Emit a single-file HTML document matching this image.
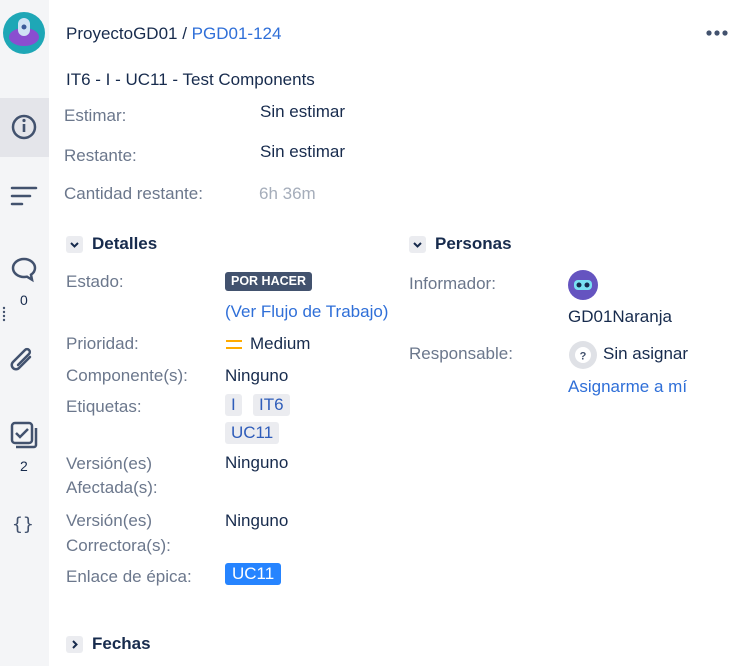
<!DOCTYPE html>
<html><head><meta charset="utf-8"><style>
*{margin:0;padding:0;box-sizing:border-box}
body{width:742px;height:666px;background:#fff;font-family:"Liberation Sans",sans-serif;font-size:17px;color:#172b4d;position:relative;overflow:hidden}
.a{position:absolute;white-space:nowrap;line-height:20px}
.l{color:#6b778c}
.blue{color:#2f6fd8}
#side{position:absolute;left:0;top:0;width:49px;height:666px;background:#f4f5f7}
.tag{background:#ebecf0;color:#2f5dba;padding:0 6px;border-radius:3px;line-height:22px;height:22px}
.h{font-weight:bold;font-size:17px}
.chev{position:absolute;width:17px;height:17px;background:#ebecf0;border-radius:3px}
</style></head><body>
<div id="side">
<div style="position:absolute;left:0;top:98px;width:49px;height:59px;background:#e4e5ea"></div>
<svg width="49" height="666" style="position:absolute;left:0;top:0">
<circle cx="24" cy="33" r="21" fill="#1ea7b6"/><ellipse cx="24" cy="37" rx="15" ry="9" fill="#8a4ed0"/><rect x="18" y="18" width="12" height="18" rx="6" fill="#cfe3f5"/><circle cx="24" cy="27" r="2.5" fill="#3b5a9a"/>
<circle cx="24" cy="127" r="11" fill="none" stroke="#42526e" stroke-width="2.5"/><rect x="22.7" y="124" width="2.6" height="8" fill="#42526e"/><circle cx="24" cy="120.5" r="1.6" fill="#42526e"/>
<g stroke="#42526e" stroke-width="2.5" stroke-linecap="round"><line x1="12" y1="188" x2="36" y2="188"/><line x1="12" y1="196" x2="30" y2="196"/><line x1="12" y1="204" x2="22" y2="204"/></g>
<path d="M24 259c-6 0-11 4-11 9s5 9 11 9c1 0 2 0 3-0.3l5 3-1-5c3-2 4-4 4-6.7 0-5-5-9-11-9z" fill="none" stroke="#42526e" stroke-width="2.5"/>
<g fill="#42526e"><circle cx="4" cy="308" r="1.2"/><circle cx="4" cy="312" r="1.2"/><circle cx="4" cy="316" r="1.2"/><circle cx="4" cy="320" r="1.2"/></g>
<path d="M30 357l-11 11a4 4 0 0 1-6-6l12-12a2.5 2.5 0 0 1 4 4l-11 11" fill="none" stroke="#42526e" stroke-width="2.5" stroke-linecap="round"/>
<rect x="12" y="423" width="20" height="20" rx="3" fill="none" stroke="#42526e" stroke-width="2.5"/><path d="M36 428v17a2 2 0 0 1-2 2H16" fill="none" stroke="#42526e" stroke-width="2.5"/><path d="M16 433l4 4 8-8" fill="none" stroke="#42526e" stroke-width="2.5"/>
</svg>
<div class="a" style="left:20px;top:290px;font-size:14px">0</div>
<div class="a" style="left:20px;top:456px;font-size:14px">2</div>
<div class="a" style="left:12px;top:515px;font-size:18px;color:#42526e;font-family:'DejaVu Sans Mono',monospace">{}</div>
</div>
<div class="a" style="left:66px;top:24px">ProyectoGD01 / <span class="blue">PGD01-124</span></div>
<svg style="position:absolute;left:706px;top:29px" width="22" height="8"><g fill="#42526e"><circle cx="3" cy="4" r="2.6"/><circle cx="11" cy="4" r="2.6"/><circle cx="19" cy="4" r="2.6"/></g></svg>
<div class="a" style="left:66px;top:70px">IT6 - I - UC11 - Test Components</div>
<div class="a l" style="left:64px;top:106px">Estimar:</div><div class="a" style="left:260px;top:102px">Sin estimar</div>
<div class="a l" style="left:64px;top:146px">Restante:</div><div class="a" style="left:260px;top:142px">Sin estimar</div>
<div class="a l" style="left:64px;top:184px">Cantidad restante:</div><div class="a" style="left:259px;top:184px;color:#a5adba">6h 36m</div>
<div class="chev" style="left:66px;top:236px"></div><svg style="position:absolute;left:66px;top:236px" width="17" height="17"><path d="M5 7l3.5 3.5L12 7" fill="none" stroke="#172b4d" stroke-width="2"/></svg>
<div class="a h" style="left:92px;top:234px">Detalles</div>
<div class="chev" style="left:409px;top:236px"></div><svg style="position:absolute;left:409px;top:236px" width="17" height="17"><path d="M5 7l3.5 3.5L12 7" fill="none" stroke="#172b4d" stroke-width="2"/></svg>
<div class="a h" style="left:435px;top:234px">Personas</div>
<div class="a l" style="left:66px;top:272px">Estado:</div>
<div class="a" style="left:225px;top:272px;background:#42526e;color:#fff;font-weight:bold;font-size:12.5px;line-height:19px;padding:0 6px;border-radius:3px">POR HACER</div>
<div class="a blue" style="left:225px;top:302px">(Ver Flujo de Trabajo)</div>
<div class="a l" style="left:66px;top:334px">Prioridad:</div>
<div class="a" style="left:226px;top:334px"><span style="display:inline-block;width:16px;vertical-align:middle;border-top:2.5px solid #ffab00;border-bottom:2.5px solid #ffab00;height:9px;margin-right:8px"></span>Medium</div>
<div class="a l" style="left:66px;top:366px">Componente(s):</div><div class="a" style="left:225px;top:366px">Ninguno</div>
<div class="a l" style="left:66px;top:397px">Etiquetas:</div>
<div class="a tag" style="left:225px;top:394px">I</div><div class="a tag" style="left:253px;top:394px">IT6</div>
<div class="a tag" style="left:225px;top:422px">UC11</div>
<div class="a l" style="left:66px;top:454px">Versión(es)</div><div class="a l" style="left:66px;top:478px">Afectada(s):</div><div class="a" style="left:225px;top:453px">Ninguno</div>
<div class="a l" style="left:66px;top:511px">Versión(es)</div><div class="a l" style="left:66px;top:536px">Correctora(s):</div><div class="a" style="left:225px;top:511px">Ninguno</div>
<div class="a l" style="left:66px;top:567px">Enlace de épica:</div>
<div class="a" style="left:225px;top:563px;background:#2684ff;color:#fff;padding:0 7px;border-radius:3px;line-height:22px">UC11</div>
<div class="chev" style="left:66px;top:636px"></div><svg style="position:absolute;left:66px;top:636px" width="17" height="17"><path d="M7 5l3.5 3.5L7 12" fill="none" stroke="#172b4d" stroke-width="2"/></svg>
<div class="a h" style="left:92px;top:634px">Fechas</div>
<div class="a l" style="left:409px;top:274px">Informador:</div>
<svg style="position:absolute;left:567px;top:269px" width="32" height="32"><circle cx="16" cy="16" r="15" fill="#6554c0"/><rect x="7" y="11" width="18" height="10" rx="4" fill="#79e2f2"/><circle cx="12" cy="16" r="2.5" fill="#172b4d"/><circle cx="20" cy="16" r="2.5" fill="#172b4d"/></svg>
<div class="a" style="left:568px;top:307px">GD01Naranja</div>
<div class="a l" style="left:409px;top:344px">Responsable:</div>
<svg style="position:absolute;left:568px;top:340px" width="30" height="30"><circle cx="15" cy="15" r="14" fill="#dfe1e6"/><circle cx="15" cy="15" r="8" fill="#fff"/><text x="15" y="19.5" font-size="11" font-weight="bold" text-anchor="middle" fill="#42526e" font-family="Liberation Sans">?</text></svg>
<div class="a" style="left:603px;top:344px">Sin asignar</div>
<div class="a blue" style="left:568px;top:377px">Asignarme a mí</div>
</body></html>
